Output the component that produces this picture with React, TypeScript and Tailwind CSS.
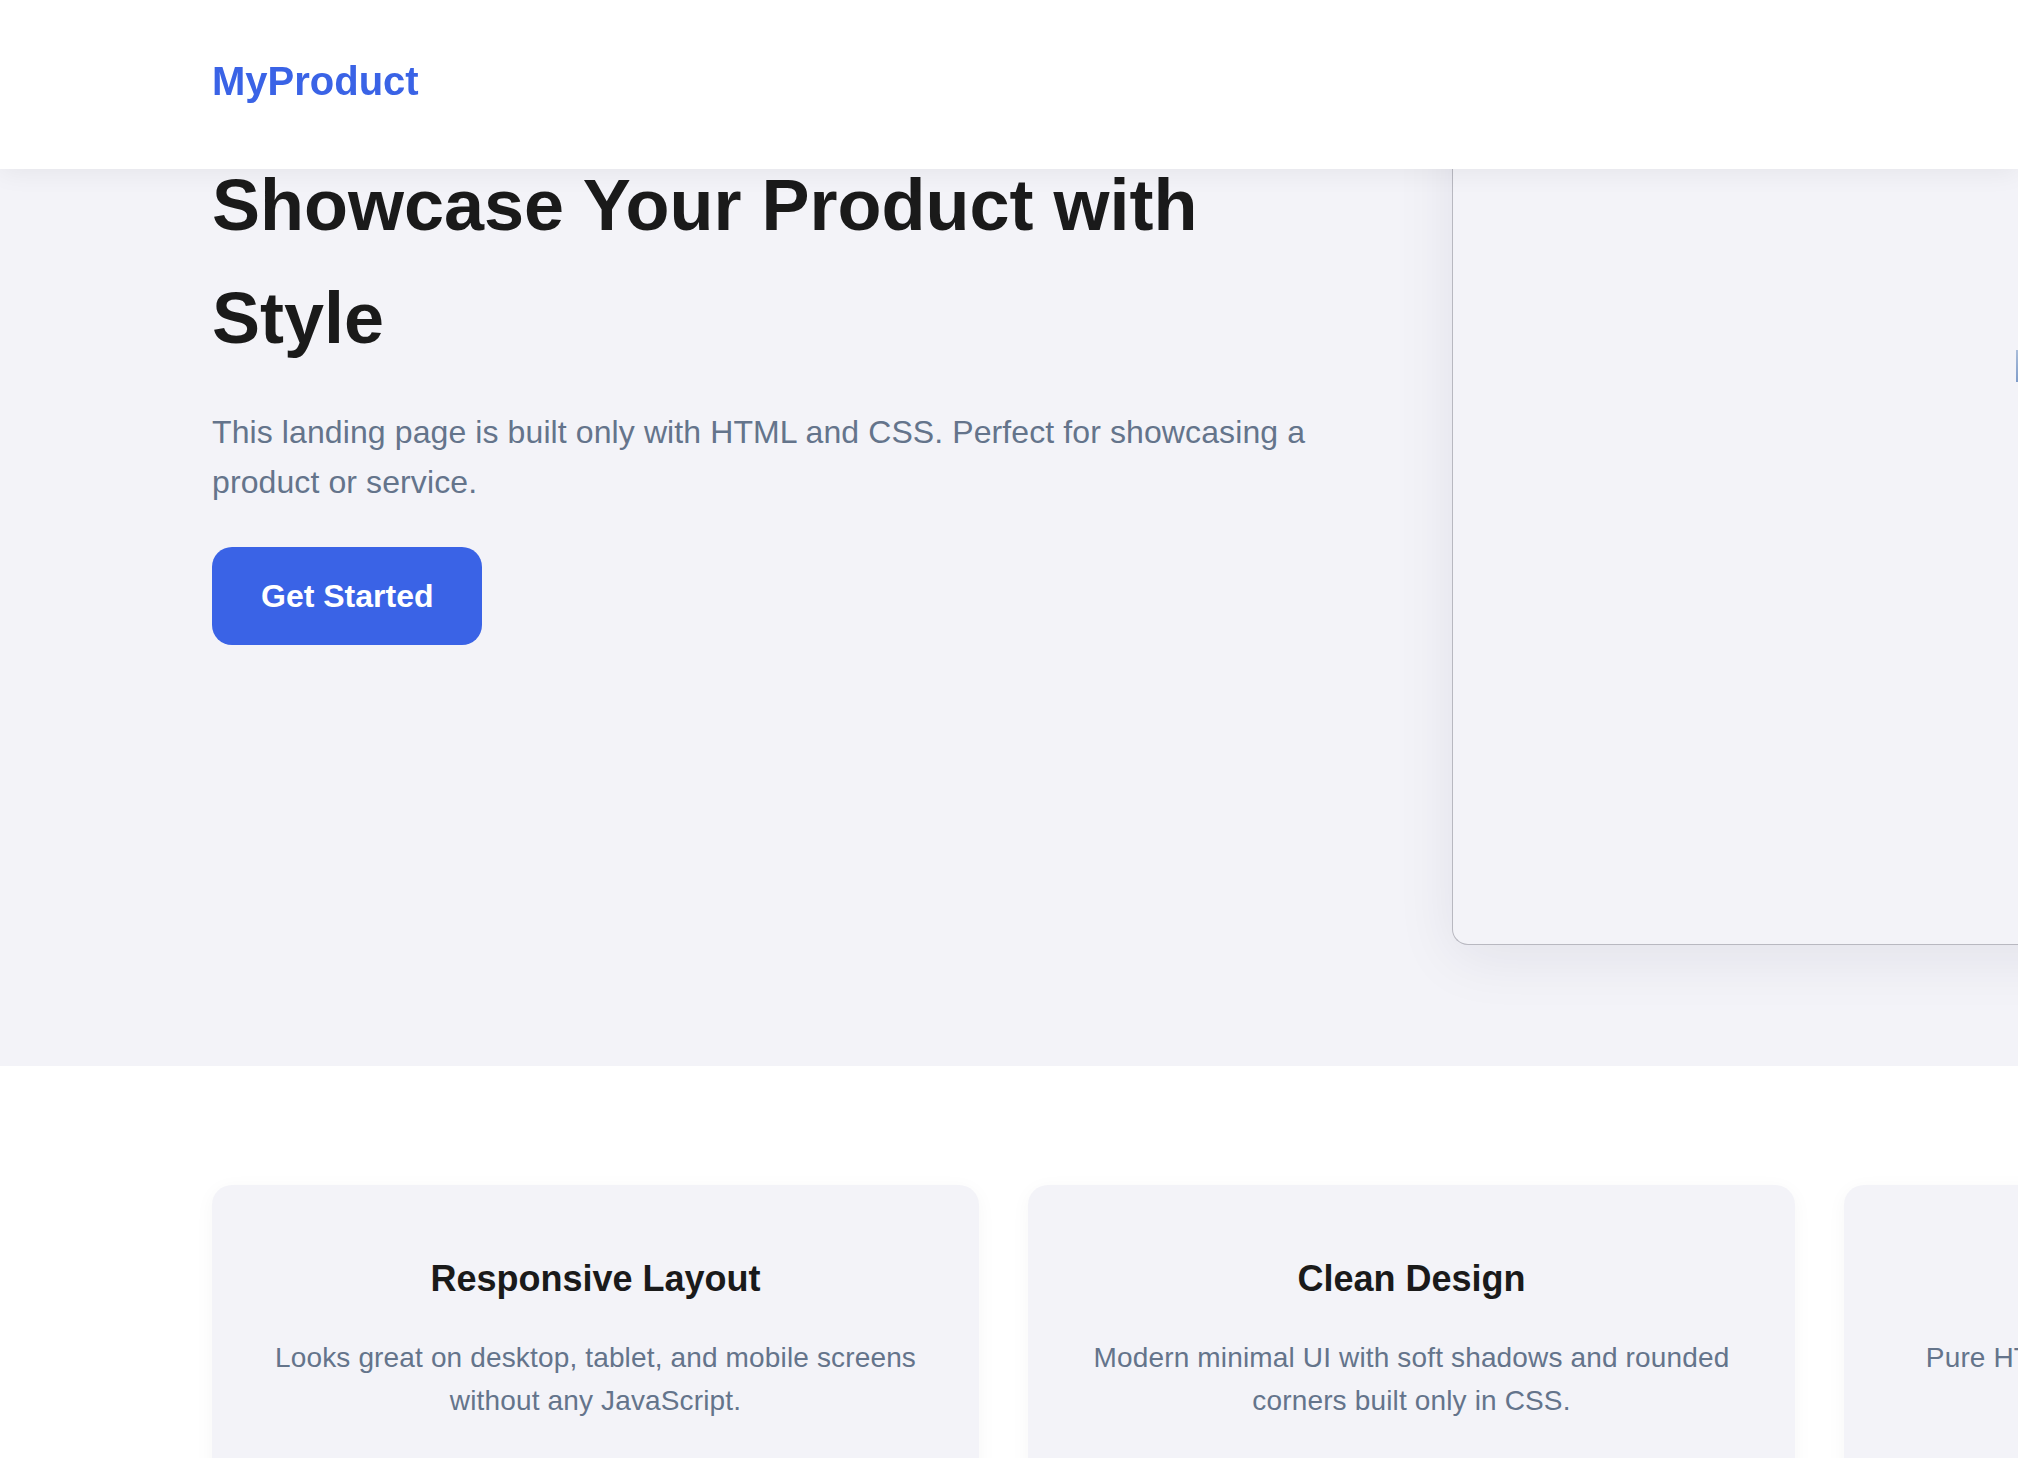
import React from 'react';

const features = [
  {
    title: 'Responsive Layout',
    description: 'Looks great on desktop, tablet, and mobile screens without any JavaScript.',
  },
  {
    title: 'Clean Design',
    description: 'Modern minimal UI with soft shadows and rounded corners built only in CSS.',
  },
  {
    title: 'Lightweight & Fast',
    description: 'Pure HTML and CSS for fast loading and simple customization.',
  },
];

const App = () => {
  return (
    <div className="min-h-screen overflow-hidden bg-white font-['Liberation_Sans',Arial,sans-serif]">
      <header className="fixed inset-x-0 top-0 z-10 flex h-[169px] items-center bg-white px-[212px] pb-[8px] shadow-[0_4px_24px_rgba(0,0,0,0.06)]">
        <span className="text-[40px] font-bold text-[#3a63e6]">MyProduct</span>
      </header>

      <section className="bg-[#f3f3f8] pt-[100px] pb-[121px]">
        <div className="flex items-start pl-[212px]">
          <div className="w-[1130px] flex-none pt-[49px]">
            <h1 className="text-[72px] font-bold leading-[113px] text-[#1a1a1a]">
              Showcase Your Product with Style
            </h1>
            <p className="mt-[32px] text-[32px] leading-[50px] tracking-[0.1px] text-[#64748b]">
              This landing page is built only with HTML and CSS. Perfect for showcasing a product or service.
            </p>
            <button className="mt-[40px] h-[98px] rounded-[20px] bg-[#3a63e6] px-[49px] text-[32px] font-bold text-white">
              Get Started
            </button>
          </div>

          <div className="relative ml-[110px] h-[845px] w-[700px] flex-none rounded-bl-[16px] border-b border-l border-[#b8b8c0] bg-[#f3f3f8] shadow-[0_12px_60px_rgba(20,20,60,0.08)]">
            <div className="absolute top-[250px] left-[563px] h-[32px] w-[60px] bg-gradient-to-b from-[#aabdda] to-[#7f9cc9]" />
          </div>
        </div>
      </section>

      <section className="bg-white pt-[119px] pb-[80px]">
        <div className="flex gap-[49px] pl-[212px]">
          {features.map((feature) => (
            <div
              key={feature.title}
              className="w-[767px] flex-none rounded-[20px] bg-[#f3f3f8] px-[56px] pt-[72px] pb-[72px] text-center shadow-[0_4px_20px_rgba(0,0,0,0.04)]"
            >
              <h3 className="text-[36px] font-bold leading-[43px] text-[#1a1a1a]">{feature.title}</h3>
              <p className="mt-[36px] text-[28px] leading-[43px] tracking-[0.15px] text-[#64748b]">
                {feature.description}
              </p>
            </div>
          ))}
        </div>
      </section>
    </div>
  );
};

export default App;
